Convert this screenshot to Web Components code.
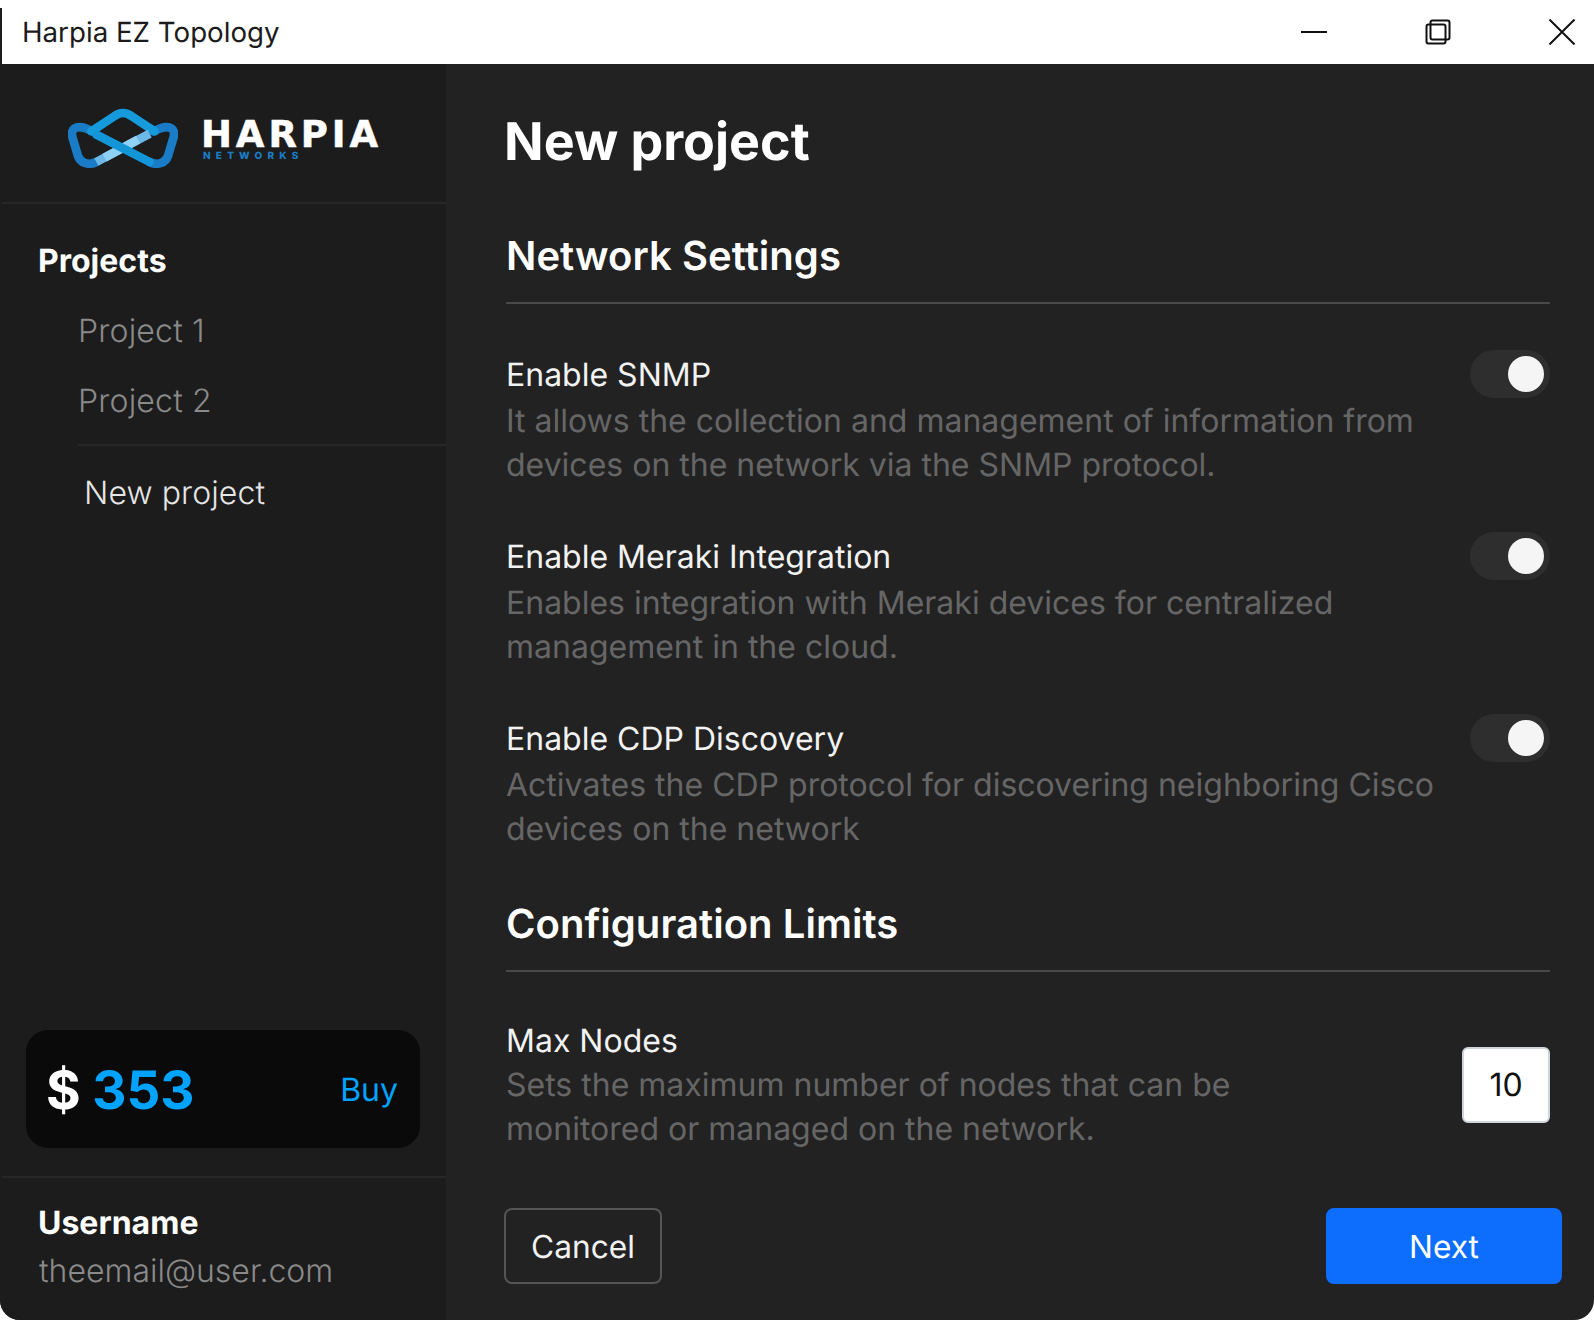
<!DOCTYPE html>
<html lang="en">
<head>
<meta charset="utf-8">
<title>Harpia EZ Topology</title>
<style>
  html, body { margin: 0; padding: 0; background: #fff; }
  body { font-family: Inter, "Liberation Sans", sans-serif; text-rendering: geometricPrecision; }
</style>
</head>
<body>
<harpia-window>
  <title-bar slot="top">Harpia EZ Topology</title-bar>

  <side-nav slot="side">
    <harpia-logo slot="logo"></harpia-logo>
    <nav-item slot="nav" kind="head">Projects</nav-item>
    <nav-item slot="nav" kind="sub">Project 1</nav-item>
    <nav-item slot="nav" kind="sub">Project 2</nav-item>
    <nav-item slot="nav" kind="new">New project</nav-item>
    <credit-card slot="bottom" amount="353"></credit-card>
    <user-card slot="user" name="Username" email="theemail@user.com"></user-card>
  </side-nav>

  <project-form slot="main" heading="New project">
    <section-head>Network Settings</section-head>
    <setting-row label="Enable SNMP">
      It allows the collection and management of information from devices on the network via the SNMP protocol.
      <toggle-switch slot="control"></toggle-switch>
    </setting-row>
    <setting-row label="Enable Meraki Integration">
      Enables integration with Meraki devices for centralized management in the cloud.
      <toggle-switch slot="control"></toggle-switch>
    </setting-row>
    <setting-row label="Enable CDP Discovery">
      Activates the CDP protocol for discovering neighboring Cisco devices on the network
      <toggle-switch slot="control"></toggle-switch>
    </setting-row>
    <section-head>Configuration Limits</section-head>
    <setting-row label="Max Nodes" kind="limit">
      Sets the maximum number of nodes that can be monitored or managed on the network.
      <num-input slot="control" value="10"></num-input>
    </setting-row>
    <action-btn slot="footer">Cancel</action-btn>
    <action-btn slot="footer" primary>Next</action-btn>
  </project-form>
</harpia-window>

<script>
class HarpiaWindow extends HTMLElement {
  connectedCallback() {
    this.attachShadow({ mode: 'open' });
    this.shadowRoot.innerHTML = `
      <style>
        :host {
          display: flex;
          flex-direction: column;
          width: 1594px;
          height: 1320px;
          background: #222;
          border-radius: 0 0 20px 20px;
          overflow: hidden;
        }
        .body { flex: 1; display: flex; min-height: 0; }
      </style>
      <slot name="top"></slot>
      <div class="body">
        <slot name="side"></slot>
        <slot name="main"></slot>
      </div>
    `;
  }
}

class TitleBar extends HTMLElement {
  connectedCallback() {
    this.attachShadow({ mode: 'open' });
    this.shadowRoot.innerHTML = `
      <style>
        :host {
          display: flex;
          align-items: center;
          height: 64px;
          padding: 0 19px 0 22px;
          /* thin dark edge down the left, stops short of the top corner */
          background: linear-gradient(#1c1c1c, #1c1c1c) 0 8px / 2px 56px no-repeat, #fff;
          color: #1c1c1c;
          font-size: 27.7px;
        }
        .name { flex: 1; }
        .controls { display: flex; gap: 98px; align-items: center; }
        svg { display: block; width: 26px; height: 26px; fill: none; stroke: #111; stroke-width: 2; }
      </style>
      <span class="name"><slot></slot></span>
      <div class="controls">
        <svg viewBox="0 0 26 26"><path d="M0 13H26"/></svg>
        <svg viewBox="0 0 26 26"><rect x="1.5" y="5.5" width="19" height="19" rx="2"/><rect x="5.5" y="1.5" width="19" height="19" rx="2"/></svg>
        <svg viewBox="0 0 26 26"><path d="M0.5 0.5L25.5 25.5M25.5 0.5L0.5 25.5"/></svg>
      </div>
    `;
  }
}

class SideNav extends HTMLElement {
  connectedCallback() {
    this.attachShadow({ mode: 'open' });
    this.shadowRoot.innerHTML = `
      <style>
        :host {
          display: flex;
          flex-direction: column;
          flex: none;
          width: 446px;
          box-sizing: border-box;
          background: #1c1c1c;
          padding-left: 2px;
        }
        .logo { height: 140px; box-sizing: border-box; border-bottom: 2px solid #272727; }
        .nav { flex: 1; padding-top: 22px; }
        .bottom { padding: 0 26px 28px 24px; }
        .user { border-top: 2px solid #272727; }
      </style>
      <div class="logo"><slot name="logo"></slot></div>
      <div class="nav"><slot name="nav"></slot></div>
      <div class="bottom"><slot name="bottom"></slot></div>
      <div class="user"><slot name="user"></slot></div>
    `;
  }
}

class HarpiaLogo extends HTMLElement {
  connectedCallback() {
    this.attachShadow({ mode: 'open' });
    this.shadowRoot.innerHTML = `
      <style>
        :host { display: flex; align-items: flex-start; padding: 44px 0 0 66px; }
        svg { display: block; width: 110px; height: 60px; flex: none; fill: none; stroke-width: 26; stroke-linecap: round; stroke-linejoin: round; }
        .text { margin: 11px 0 0 23px; display: flex; flex-direction: column; }
        .big {
          color: #fff;
          font: 700 37px/31px "DejaVu Sans", sans-serif;
          letter-spacing: 3.9px;
          -webkit-text-stroke: 0.5px #fff;
        }
        .small {
          color: #1a7cc6;
          font: 800 10px/10px Inter, sans-serif;
          letter-spacing: 5.2px;
          margin: 1px 0 0 2px;
        }
      </style>
      <svg viewBox="25 38 330 180">
        <path stroke="#1a7cc6" d="M100 108L75 98C50 90 32 100 38 125L55 182C62 202 85 212 110 200"/>
        <path stroke="#1a7cc6" d="M280 108L305 98C330 90 348 100 342 125L325 182C318 202 295 212 270 200"/>
        <path stroke="#159bdc" d="M95 108L165 62C180 50 200 50 215 62L285 108"/>
        <path stroke="#6db8e8" stroke-linecap="butt" d="M110 200L270 115"/>
        <path stroke="#8fd0f5" stroke-linecap="butt" d="M135 187L235 133"/>
        <path stroke="#1296d8" d="M110 118L270 200"/>
      </svg>
      <div class="text"><span class="big">HARPIA</span><span class="small">NETWORKS</span></div>
    `;
  }
}

class NavItem extends HTMLElement {
  connectedCallback() {
    this.attachShadow({ mode: 'open' });
    this.shadowRoot.innerHTML = `
      <style>
        :host { display: block; font-size: 32px; line-height: 70px; color: #8a8a8a; font-weight: 300; letter-spacing: 0.2px; padding-left: 76px; }
        :host([kind="head"]) { color: #fff; font-weight: 700; letter-spacing: 0; padding-left: 36px; }
        :host([kind="new"]) { color: #e6e6e6; letter-spacing: 0.1px; margin-left: 76px; padding: 12px 0 0 6px; border-top: 2px solid #272727; margin-top: 8px; }
      </style>
      <slot></slot>
    `;
  }
}

class CreditCard extends HTMLElement {
  connectedCallback() {
    this.attachShadow({ mode: 'open' });
    this.shadowRoot.innerHTML = `
      <style>
        :host {
          display: flex;
          align-items: center;
          justify-content: space-between;
          height: 118px;
          padding: 0 22px 0 20px;
          background: #0a0a0a;
          border-radius: 22px;
        }
        .amt { font-size: 53px; font-weight: 700; color: #00a3ff; margin-top: 2px; }
        .cur { color: #fff; margin-right: -1px; }
        .buy { font-size: 32px; color: #00a3ff; }
      </style>
      <span class="amt"><span class="cur">$</span> ${this.getAttribute('amount')}</span>
      <span class="buy">Buy</span>
    `;
  }
}

class UserCard extends HTMLElement {
  connectedCallback() {
    this.attachShadow({ mode: 'open' });
    this.shadowRoot.innerHTML = `
      <style>
        :host { display: block; padding: 20px 0 0 36px; height: 142px; box-sizing: border-box; }
        .name { color: #fff; font-size: 32px; font-weight: 700; line-height: 49px; }
        .mail { color: #8a8a8a; font-size: 32px; font-weight: 300; line-height: 48px; margin-left: 1px; }
      </style>
      <div class="name">${this.getAttribute('name')}</div>
      <div class="mail">${this.getAttribute('email')}</div>
    `;
  }
}

class ProjectForm extends HTMLElement {
  connectedCallback() {
    this.attachShadow({ mode: 'open' });
    this.shadowRoot.innerHTML = `
      <style>
        :host {
          display: flex;
          flex-direction: column;
          flex: 1;
          min-width: 0;
          box-sizing: border-box;
          padding: 0 32px 36px 58px;
        }
        h1 { margin: 42px 0 0; font-size: 52px; line-height: 72px; font-weight: 700; color: #fff; }
        .fields { flex: 1; display: flex; flex-direction: column; padding: 5px 12px 0 2px; }
        .footer { display: flex; justify-content: space-between; }
      </style>
      <h1>${this.getAttribute('heading')}</h1>
      <div class="fields"><slot></slot></div>
      <div class="footer"><slot name="footer"></slot></div>
    `;
  }
}

class SectionHead extends HTMLElement {
  connectedCallback() {
    this.attachShadow({ mode: 'open' });
    this.shadowRoot.innerHTML = `
      <style>
        :host {
          display: block;
          color: #fff;
          font-size: 40px;
          font-weight: 600;
          letter-spacing: 0.05px;
          line-height: 60px;
          margin: 43px 0 1px;
          padding-bottom: 16px;
          border-bottom: 2px solid #4a4a4a;
        }
      </style>
      <slot></slot>
    `;
  }
}

class SettingRow extends HTMLElement {
  connectedCallback() {
    this.attachShadow({ mode: 'open' });
    this.shadowRoot.innerHTML = `
      <style>
        :host { display: flex; justify-content: space-between; align-items: flex-start; margin-top: 45px; }
        .copy { width: 930px; padding-top: 1px; }
        .label { color: #f2f2f2; font-size: 32px; line-height: 48px; }
        .desc { color: #666; font-size: 32px; line-height: 44px; }
        :host([kind="limit"]) { align-items: center; }
        :host([kind="limit"]) .copy { width: 780px; }
        :host([kind="limit"]) .label { line-height: 44px; }
      </style>
      <div class="copy">
        <div class="label">${this.getAttribute('label')}</div>
        <div class="desc"><slot></slot></div>
      </div>
      <slot name="control"></slot>
    `;
  }
}

class ToggleSwitch extends HTMLElement {
  connectedCallback() {
    this.attachShadow({ mode: 'open' });
    this.shadowRoot.innerHTML = `
      <style>
        :host {
          display: flex;
          align-items: center;
          justify-content: flex-end;
          flex: none;
          width: 80px;
          height: 48px;
          box-sizing: border-box;
          padding-right: 6px;
          background: #2e2e2e;
          border-radius: 24px;
        }
        .knob { width: 36px; height: 36px; border-radius: 50%; background: #f5f5f5; }
      </style>
      <div class="knob"></div>
    `;
  }
}

class NumInput extends HTMLElement {
  connectedCallback() {
    this.attachShadow({ mode: 'open' });
    this.shadowRoot.innerHTML = `
      <style>
        :host {
          display: flex;
          align-items: center;
          justify-content: center;
          flex: none;
          width: 88px;
          height: 76px;
          box-sizing: border-box;
          background: #fff;
          border: 2px solid #ced4da;
          border-radius: 6px;
          color: #111;
          font-size: 32px;
        }
      </style>
      ${this.getAttribute('value')}
    `;
  }
}

class ActionBtn extends HTMLElement {
  connectedCallback() {
    this.attachShadow({ mode: 'open' });
    this.shadowRoot.innerHTML = `
      <style>
        :host {
          display: flex;
          align-items: center;
          justify-content: center;
          width: 158px;
          height: 76px;
          box-sizing: border-box;
          color: #f2f2f2;
          font-size: 31.7px;
          border: 2px solid #555;
          border-radius: 8px;
        }
        :host([primary]) { width: 236px; background: #0d6efd; border-color: #0d6efd; color: #fff; }
      </style>
      <slot></slot>
    `;
  }
}

customElements.define('harpia-window', HarpiaWindow);
customElements.define('title-bar', TitleBar);
customElements.define('side-nav', SideNav);
customElements.define('harpia-logo', HarpiaLogo);
customElements.define('nav-item', NavItem);
customElements.define('credit-card', CreditCard);
customElements.define('user-card', UserCard);
customElements.define('project-form', ProjectForm);
customElements.define('section-head', SectionHead);
customElements.define('setting-row', SettingRow);
customElements.define('toggle-switch', ToggleSwitch);
customElements.define('num-input', NumInput);
customElements.define('action-btn', ActionBtn);
</script>
</body>
</html>
